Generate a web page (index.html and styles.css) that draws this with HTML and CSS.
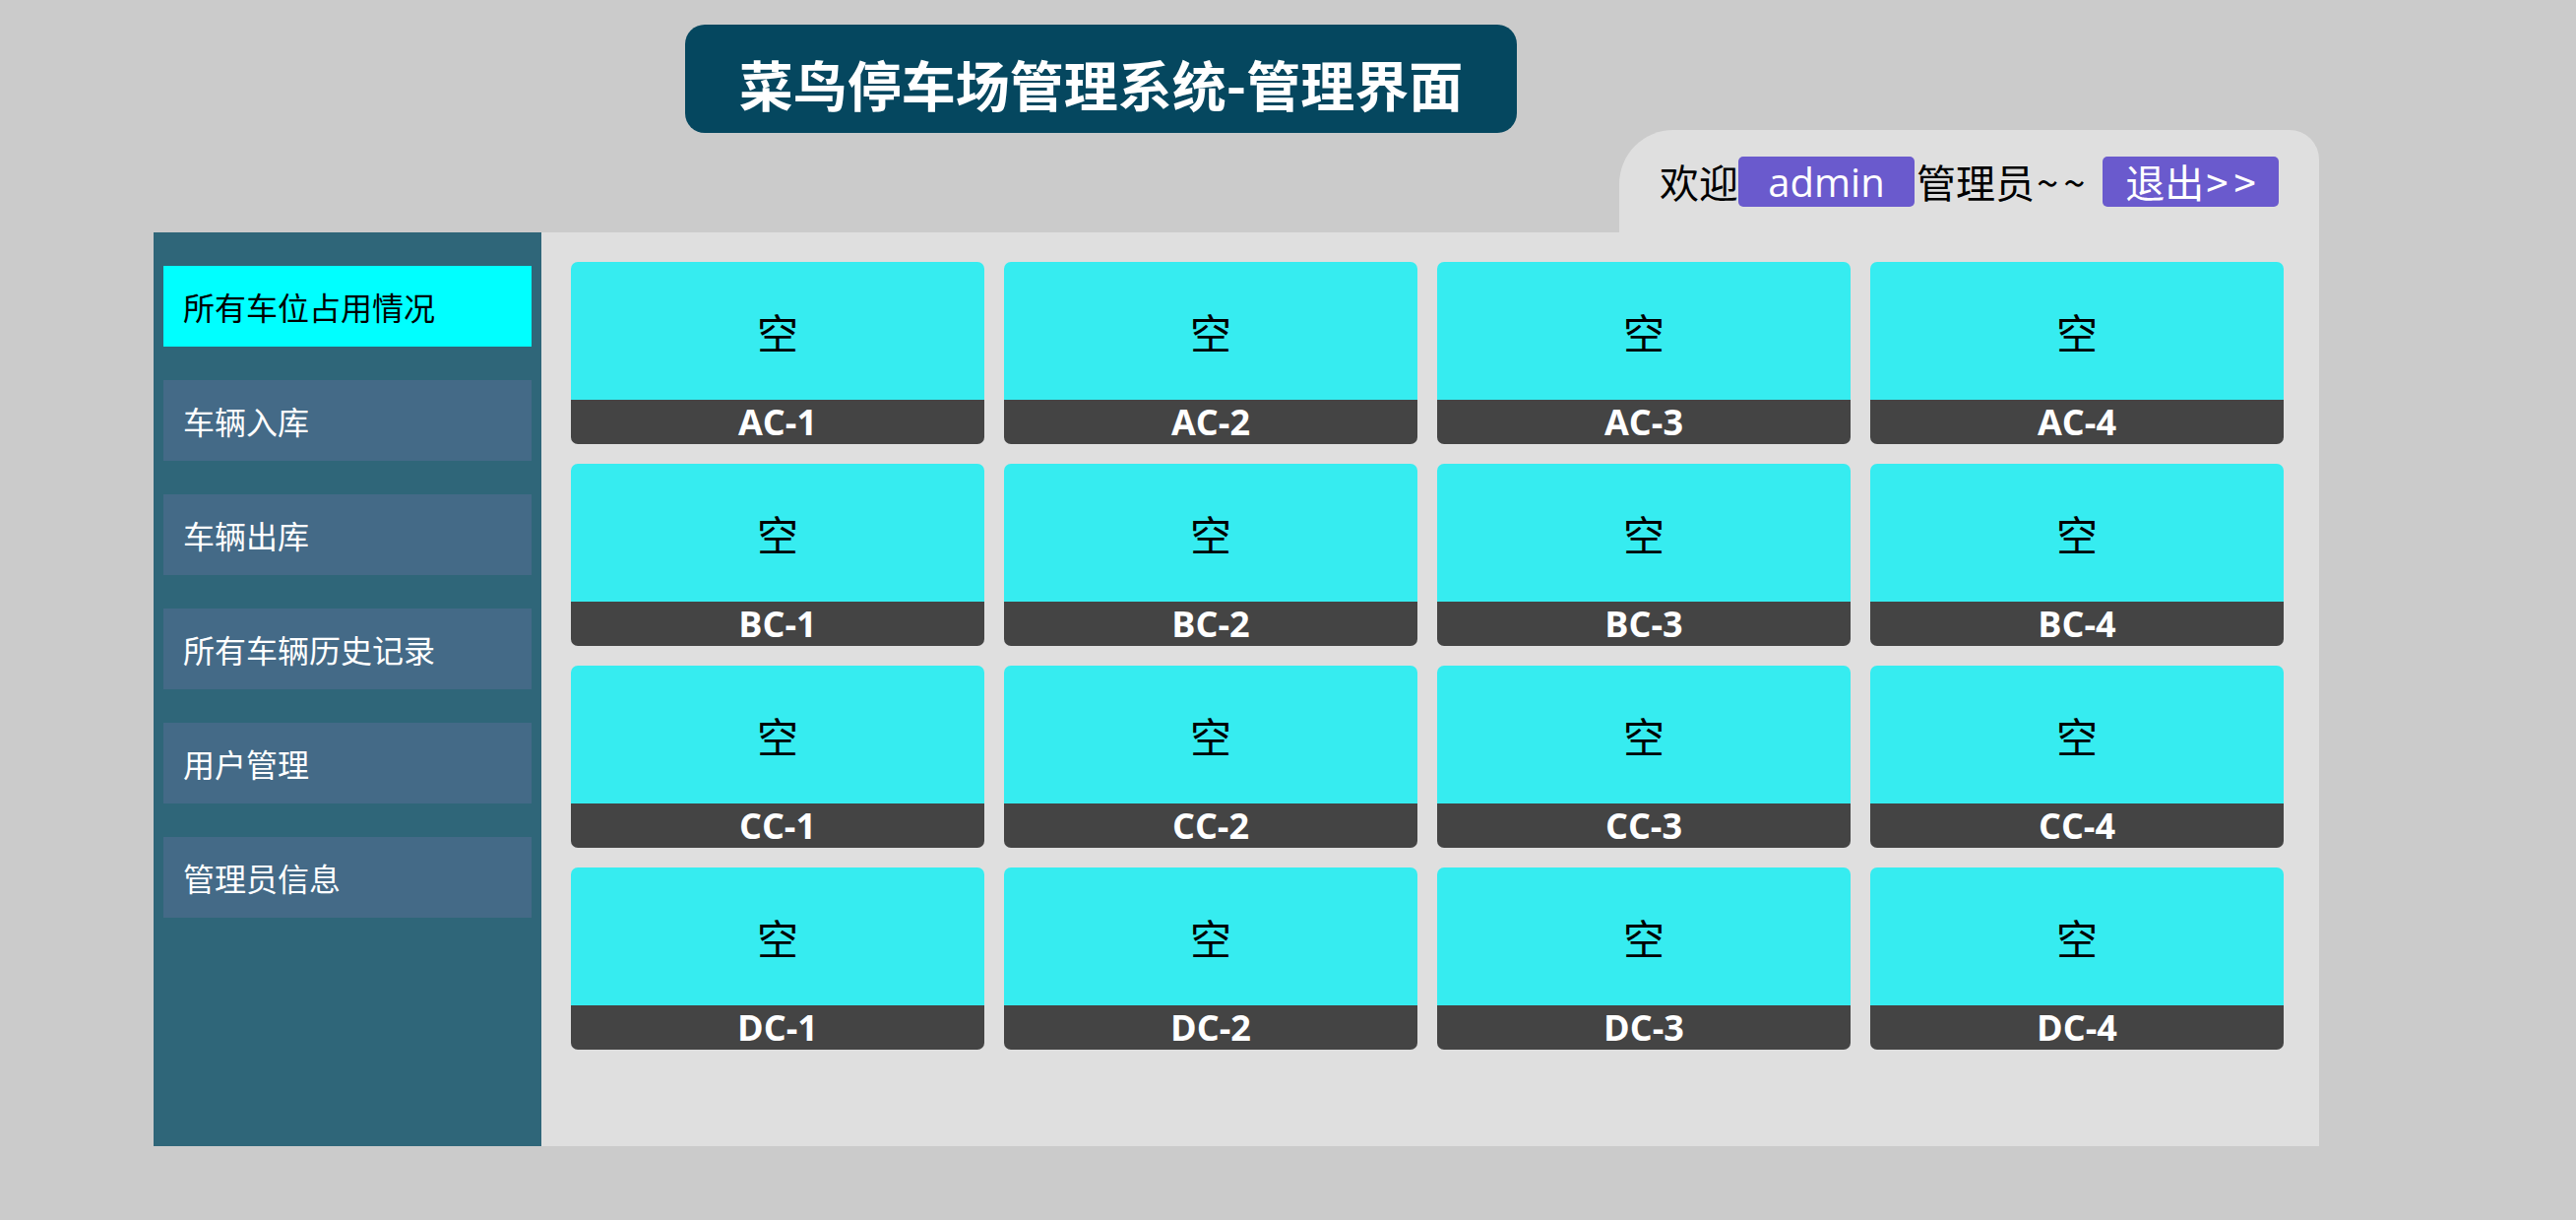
FILE: index.html
```html
<!DOCTYPE html>
<html lang="zh-CN">
<head>
<meta charset="utf-8">
<title>菜鸟停车场管理系统-管理界面</title>
<link rel="stylesheet" href="styles.css">
</head>
<body>
<div class="page">
  <header class="header">
    <h1 class="title">菜鸟停车场管理系统-管理界面</h1>
    <div class="tabbar">
      <div class="tab">
        <span class="welcome">欢迎</span><span class="badge">admin</span><span class="welcome role">管理员<span class="tilde">~~</span></span><a class="badge logout">退出<span class="arrows">&gt;&gt;</span></a>
      </div>
    </div>
  </header>
  <div class="main">
    <nav class="sidebar">
      <div class="menu-item active">所有车位占用情况</div>
      <div class="menu-item">车辆入库</div>
      <div class="menu-item">车辆出库</div>
      <div class="menu-item">所有车辆历史记录</div>
      <div class="menu-item">用户管理</div>
      <div class="menu-item">管理员信息</div>
    </nav>
    <section class="content">
      <div class="card"><div class="card-top">空</div><div class="card-label">AC-1</div></div>
      <div class="card"><div class="card-top">空</div><div class="card-label">AC-2</div></div>
      <div class="card"><div class="card-top">空</div><div class="card-label">AC-3</div></div>
      <div class="card"><div class="card-top">空</div><div class="card-label">AC-4</div></div>
      <div class="card"><div class="card-top">空</div><div class="card-label">BC-1</div></div>
      <div class="card"><div class="card-top">空</div><div class="card-label">BC-2</div></div>
      <div class="card"><div class="card-top">空</div><div class="card-label">BC-3</div></div>
      <div class="card"><div class="card-top">空</div><div class="card-label">BC-4</div></div>
      <div class="card"><div class="card-top">空</div><div class="card-label">CC-1</div></div>
      <div class="card"><div class="card-top">空</div><div class="card-label">CC-2</div></div>
      <div class="card"><div class="card-top">空</div><div class="card-label">CC-3</div></div>
      <div class="card"><div class="card-top">空</div><div class="card-label">CC-4</div></div>
      <div class="card"><div class="card-top">空</div><div class="card-label">DC-1</div></div>
      <div class="card"><div class="card-top">空</div><div class="card-label">DC-2</div></div>
      <div class="card"><div class="card-top">空</div><div class="card-label">DC-3</div></div>
      <div class="card"><div class="card-top">空</div><div class="card-label">DC-4</div></div>
    </section>
  </div>
</div>
</body>
</html>
```
FILE: styles.css
```css
html, body {
  margin: 0;
  padding: 0;
  background: #cbcbcb;
  font-family: "Noto Sans CJK SC", "Noto Sans", sans-serif;
}

.page {
  width: 2200px;
  margin-left: 156px;
}

.header {
  padding-top: 25px;
}

.title {
  box-sizing: border-box;
  width: 845px;
  height: 110px;
  margin: 0 0 -3px 540px;
  background: #05475f;
  border-radius: 20px;
  color: #fff;
  font-size: 55px;
  font-weight: 700;
  display: flex;
  align-items: center;
  justify-content: center;
  padding-top: 8px;
  line-height: 1;
}

.tabbar {
  display: flex;
  justify-content: flex-end;
}

.tab {
  box-sizing: border-box;
  width: 711px;
  height: 104px;
  padding: 0 41px;
  background: #dfdfdf;
  border-radius: 55px 30px 0 0;
  display: flex;
  align-items: center;
  font-size: 40px;
  color: #000;
}

.welcome {
  line-height: 51px;
}

.role {
  margin-left: 2px;
}

.tilde {
  letter-spacing: 5px;
  margin-left: 2px;
}

.badge {
  box-sizing: border-box;
  width: 179px;
  height: 51px;
  line-height: 51px;
  background: #6a5acd;
  border-radius: 5px;
  color: #fff;
  text-align: center;
  font-family: "Open Sans", "Noto Sans CJK SC", sans-serif;
  font-size: 40px;
}

.logout {
  margin-left: auto;
  font-family: "Noto Sans CJK SC", sans-serif;
  cursor: pointer;
}

.arrows {
  letter-spacing: 6px;
  margin-left: 2px;
  margin-right: -6px;
}

.main {
  display: flex;
  height: 928px;
}

.sidebar {
  box-sizing: border-box;
  width: 394px;
  background: #2f6679;
  padding: 34px 10px;
  display: flex;
  flex-direction: column;
  gap: 34px;
}

.menu-item {
  height: 82px;
  background: #446a87;
  color: #fff;
  font-size: 32px;
  padding-left: 20px;
  display: flex;
  align-items: center;
}

.menu-item.active {
  background: #00ffff;
  color: #000;
}

.content {
  flex: 1;
  background: #dfdfdf;
  padding: 30px 36px 0 30px;
  display: grid;
  grid-template-columns: repeat(4, 420px);
  grid-auto-rows: 185px;
  gap: 20px;
  align-content: start;
}

.card {
  display: flex;
  flex-direction: column;
}

.card-top {
  height: 140px;
  background: #36ecf0;
  border-radius: 7px 7px 0 0;
  color: #000;
  font-size: 42px;
  display: flex;
  align-items: center;
  justify-content: center;
}

.card-label {
  height: 45px;
  background: #444444;
  border-radius: 0 0 7px 7px;
  color: #fff;
  text-align: center;
  font-family: "Open Sans", sans-serif;
  font-weight: 700;
  font-size: 36px;
  line-height: 45px;
}
```
